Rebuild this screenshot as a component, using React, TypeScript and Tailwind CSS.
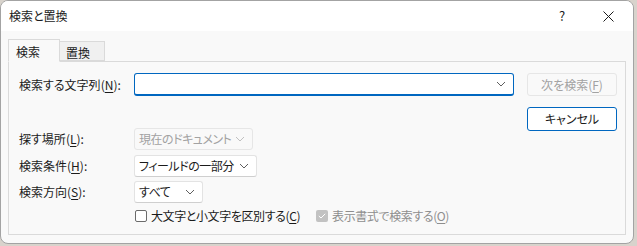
import React from 'react';

const FONT = { fontFamily: '"Noto Sans CJK JP", "Noto Sans", sans-serif' };

const Chevron = ({ color = '#5f5f5f' }: { color?: string }) => (
  <svg width="10" height="6" viewBox="0 0 10 6" fill="none">
    <polyline points="1,1 5,5 9,1" stroke={color} strokeWidth="1" />
  </svg>
);

const Label = ({ text, hot }: { text: string; hot: string }) => (
  <span className="w-[115px] shrink-0 whitespace-nowrap text-[12px] text-[#1b1b1b]">
    {text}(<span className="underline underline-offset-2">{hot}</span>):
  </span>
);

const Select = ({ value, width, disabled }: { value: string; width: string; disabled?: boolean }) => (
  <div
    className={`${width} h-[22px] flex items-center justify-between pl-[4px] pr-[7px] rounded-[3px] border text-[12px] tracking-[-0.5px] whitespace-nowrap ${
      disabled ? 'border-[#e6e6e6] bg-[#f9f9f9] text-[#a2a2a2]' : 'border-[#e3e3e3] border-b-[#cfcfcf] bg-white text-[#1b1b1b]'
    }`}
  >
    <span>{value}</span>
    <Chevron color={disabled ? '#c0c0c0' : '#5f5f5f'} />
  </div>
);

const App: React.FC = () => {
  return (
    <div className="w-[637px] h-[246px] bg-[#d8d3cc] overflow-hidden [font-feature-settings:'palt']" style={FONT}>
      <div className="w-[634px] h-[244px] rounded-[8px] border border-[#a3a3a3] bg-[#f9f9f9] overflow-hidden flex flex-col">
        {/* Title bar */}
        <div className="h-[30px] shrink-0 bg-white flex items-center pl-[8px]">
          <span className="text-[12px] text-[#1b1b1b]">検索と置換</span>
          <span className="ml-auto w-[46px] text-center text-[13px] text-[#1b1b1b]">?</span>
          <span className="w-[46px] mr-[2px] flex justify-center">
            <svg width="11" height="11" viewBox="0 0 11 11">
              <path d="M0.5 0.5 L10.5 10.5 M10.5 0.5 L0.5 10.5" stroke="#1b1b1b" strokeWidth="1" />
            </svg>
          </span>
        </div>

        {/* Body */}
        <div className="flex-1 pl-[7px] pr-[7px]">
          {/* Tabs */}
          <div className="h-[30px] flex items-end">
            <div className="w-[52px] h-[23px] -mb-px z-10 border border-[#dadada] border-b-[#f9f9f9] bg-[#f9f9f9] pl-[7px] pt-[3px] text-[12px] text-[#1b1b1b]">
              検索
            </div>
            <div className="w-[45px] h-[20px] border border-l-0 border-[#dadada] bg-[#f0f0f0] pl-[6px] pt-[4px] text-[12px] leading-[14px] text-[#1b1b1b]">
              置換
            </div>
          </div>

          {/* Panel */}
          <div className="h-[174px] w-[618px] border border-[#dadada] flex pl-[10px]">
            <div className="flex flex-col">
              <div className="mt-[11px] h-[23px] flex items-center">
                <Label text="検索する文字列" hot="N" />
                <div className="w-[380px] h-[23px] rounded-[3px] border border-[#0067c0] border-b-2 bg-white flex items-center justify-end pr-[7px]">
                  <Chevron />
                </div>
              </div>
              <div className="mt-[32px] h-[22px] flex items-center">
                <Label text="探す場所" hot="L" />
                <Select value="現在のドキュメント" width="w-[119px]" disabled />
              </div>
              <div className="mt-[5px] h-[22px] flex items-center">
                <Label text="検索条件" hot="H" />
                <Select value="フィールドの一部分" width="w-[123px]" />
              </div>
              <div className="mt-[4px] h-[22px] flex items-center">
                <Label text="検索方向" hot="S" />
                <Select value="すべて" width="w-[69px]" />
              </div>
              <div className="mt-[5px] h-[16px] flex items-center pl-[115px] text-[12px] tracking-[-0.4px] whitespace-nowrap">
                <span className="w-[12px] h-[12px] ml-[1px] rounded-[2px] border border-[#6b6b6b] bg-white" />
                <span className="ml-[4px] text-[#1b1b1b]">
                  大文字と小文字を区別する(<span className="underline underline-offset-2">C</span>)
                </span>
                <span className="ml-[16px] w-[12px] h-[12px] rounded-[2px] bg-[#c2c2c2] flex items-center justify-center">
                  <svg width="8" height="6" viewBox="0 0 8 6" fill="none">
                    <polyline points="0.8,3 3,5 7.2,0.8" stroke="#ffffff" strokeWidth="1" />
                  </svg>
                </span>
                <span className="ml-[4px] text-[#8e8e8e]">
                  表示書式で検索する(<span className="underline underline-offset-2">O</span>)
                </span>
              </div>
            </div>

            <div className="ml-[13px] flex flex-col">
              <div className="mt-[11px] w-[90px] h-[23px] rounded-[3px] border border-[#e6e6e6] bg-[#f9f9f9] flex items-center justify-center text-[12px] text-[#a2a2a2] whitespace-nowrap">
                次を検索(<span className="underline underline-offset-2">F</span>)
              </div>
              <div className="mt-[11px] w-[90px] h-[24px] rounded-[3px] border border-[#0067c0] bg-white flex items-center justify-center text-[12px] text-[#1b1b1b]">
                キャンセル
              </div>
            </div>
          </div>
        </div>
      </div>
    </div>
  );
};

export default App;
